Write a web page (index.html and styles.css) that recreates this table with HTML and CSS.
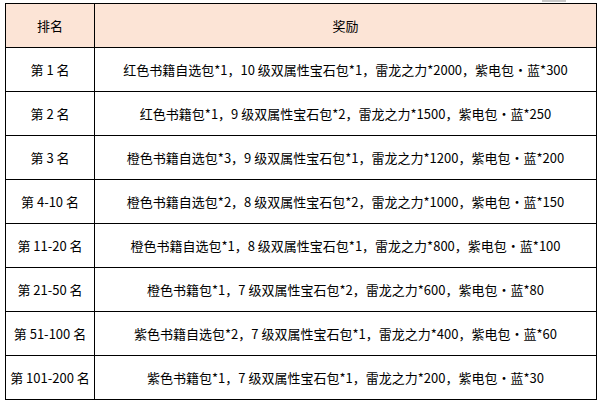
FILE: index.html
```html
<!DOCTYPE html>
<html lang="zh-CN">
<head>
<meta charset="utf-8">
<link rel="stylesheet" href="styles.css">
</head>
<body>
<div class="scroll-mark"></div>
<table class="rewards">
  <thead>
    <tr><th class="rank">排名</th><th class="prize">奖励</th></tr>
  </thead>
  <tbody>
    <tr><td>第 1 名</td><td>红色书籍自选包*1，10 级双属性宝石包*1，雷龙之力*2000，紫电包·蓝*300</td></tr>
    <tr><td>第 2 名</td><td>红色书籍包*1，9 级双属性宝石包*2，雷龙之力*1500，紫电包·蓝*250</td></tr>
    <tr><td>第 3 名</td><td>橙色书籍自选包*3，9 级双属性宝石包*1，雷龙之力*1200，紫电包·蓝*200</td></tr>
    <tr><td>第 4-10 名</td><td>橙色书籍自选包*2，8 级双属性宝石包*2，雷龙之力*1000，紫电包·蓝*150</td></tr>
    <tr><td>第 11-20 名</td><td>橙色书籍自选包*1，8 级双属性宝石包*1，雷龙之力*800，紫电包·蓝*100</td></tr>
    <tr><td>第 21-50 名</td><td>橙色书籍包*1，7 级双属性宝石包*2，雷龙之力*600，紫电包·蓝*80</td></tr>
    <tr><td>第 51-100 名</td><td>紫色书籍自选包*2，7 级双属性宝石包*1，雷龙之力*400，紫电包·蓝*60</td></tr>
    <tr><td>第 101-200 名</td><td>紫色书籍包*1，7 级双属性宝石包*1，雷龙之力*200，紫电包·蓝*30</td></tr>
  </tbody>
</table>
</body>
</html>
```

FILE: styles.css
```css
html, body {
  margin: 0;
  padding: 0;
  background: #ffffff;
}
body {
  padding: 3px 0 0 5px;
  font-family: "Noto Sans CJK SC", "Liberation Sans", sans-serif;
  font-size: 13px;
  color: #000000;
  position: relative;
}
.scroll-mark {
  position: absolute;
  left: 542px;
  top: 0;
  width: 24px;
  height: 2px;
  background: #c8c8c8;
}
.rewards {
  border-collapse: collapse;
  width: 592px;
  table-layout: fixed;
}
.rewards th,
.rewards td {
  border: 1px solid #000000;
  height: 43px;
  padding: 0;
  text-align: center;
  vertical-align: middle;
  font-weight: normal;
  white-space: nowrap;
  line-height: 16px;
}
.rewards thead th {
  background: #fce4d6;
}
.rewards .rank {
  width: 88px;
}
```
